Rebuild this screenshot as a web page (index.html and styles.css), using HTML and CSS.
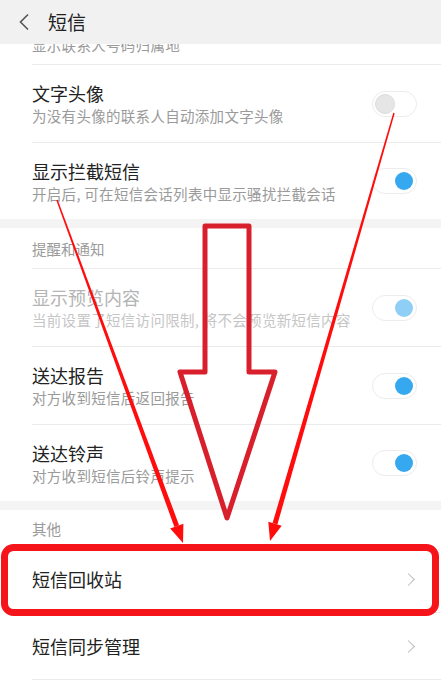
FILE: index.html
```html
<!DOCTYPE html>
<html>
<head>
  <meta charset="utf-8">
  <title>短信</title>
  <link rel="stylesheet" href="styles.css">
</head>
<body>
  <div class="screen">
    <header class="topbar">
      <svg class="back" width="12" height="18" viewBox="0 0 12 18">
        <path d="M10 1.5 L2.5 9 L10 16.5" fill="none" stroke="#555" stroke-width="1.6"/>
      </svg>
      <h1>短信</h1>
    </header>

    <main class="list">
      <!-- row scrolled up under the toolbar, only its last line peeks out -->
      <div class="row cut">
        <div class="desc">显示联系人号码归属地</div>
      </div>
      <div class="row">
        <div class="text">
          <div class="title">文字头像</div>
          <div class="desc">为没有头像的联系人自动添加文字头像</div>
        </div>
        <span class="switch"></span>
      </div>
      <div class="row last">
        <div class="text">
          <div class="title">显示拦截短信</div>
          <div class="desc">开启后, 可在短信会话列表中显示骚扰拦截会话</div>
        </div>
        <span class="switch on"></span>
      </div>

      <div class="band"></div>
      <div class="section">提醒和通知</div>
      <div class="row disabled">
        <div class="text">
          <div class="title">显示预览内容</div>
          <div class="desc">当前设置了短信访问限制, 将不会预览新短信内容</div>
        </div>
        <span class="switch on"></span>
      </div>
      <div class="row">
        <div class="text">
          <div class="title">送达报告</div>
          <div class="desc">对方收到短信后返回报告</div>
        </div>
        <span class="switch on"></span>
      </div>
      <div class="row last">
        <div class="text">
          <div class="title">送达铃声</div>
          <div class="desc">对方收到短信后铃声提示</div>
        </div>
        <span class="switch on"></span>
      </div>

      <div class="band"></div>
      <div class="section plain">其他</div>
      <div class="row link">
        <div class="title">短信回收站</div>
        <span class="chev"></span>
      </div>
      <div class="row link">
        <div class="title">短信同步管理</div>
        <span class="chev"></span>
      </div>
    </main>

    <!-- annotation drawn on top of the screenshot -->
    <svg class="marks" width="441" height="680" viewBox="0 0 441 680">
      <rect x="4.5" y="547.5" width="431" height="65" rx="9" fill="none" stroke="#f5141a" stroke-width="7"/>
      <polygon points="205,226 249,226 249,372 275,372 227,518 180,372 205,372"
               fill="none" stroke="#d81f2c" stroke-width="5" stroke-linejoin="round"/>
      <polygon points="57.7,199.7 56.3,200.3 174.4,527 179.1,525.2" fill="#ff0d0d"/>
      <polygon points="183,543 170.2,528.5 183.4,523.7" fill="#ff0d0d"/>
      <polygon points="394.7,113.2 393.3,112.8 272.6,523 277.4,524.4" fill="#ff0d0d"/>
      <polygon points="270,541 268.3,521.8 281.7,525.7" fill="#ff0d0d"/>
    </svg>
  </div>
</body>
</html>
```

FILE: styles.css
```css
body {
  margin: 0;
  background-color: #fff;
  font-family: "Noto Sans CJK SC", "Noto Sans", sans-serif;
}

.screen {
  position: relative;
  width: 441px;
  height: 680px;
  overflow: hidden;
}

.topbar {
  height: 44px;
  display: flex;
  align-items: center;
  background-color: #f1f1f1;
}

.back {
  margin-left: 18px;
  margin-right: 18px;
}

.topbar h1 {
  margin: 0;
  font-size: 19px;
  font-weight: normal;
  color: #222;
  line-height: 24px;
}

.row {
  box-sizing: border-box;
  height: 78px;
  margin-left: 32px;
  padding-right: 24px;
  display: flex;
  align-items: center;
  justify-content: space-between;
  border-bottom: 1px solid #ebebeb;
}

.row.cut {
  height: 21px;
  overflow: hidden;
  align-items: flex-start;
}

.row.cut .desc {
  margin-top: 0;
  line-height: 2px;
}

.row.last {
  height: 76px;
  border-bottom: none;
}

.row.link {
  height: 67px;
}

.title {
  font-size: 18px;
  line-height: 22px;
  color: #222;
}

.desc {
  margin-top: 2px;
  font-size: 14.5px;
  line-height: 19px;
  color: #9a9a9a;
  letter-spacing: 0.3px;
}

.disabled .title {
  color: #b4b4b4;
}

.disabled .desc {
  color: #c6c6c6;
}

.band {
  height: 9px;
  background-color: #f4f4f4;
}

.section {
  box-sizing: border-box;
  height: 41px;
  margin-left: 32px;
  display: flex;
  align-items: center;
  font-size: 14.5px;
  color: #9a9a9a;
  border-bottom: 1px solid #ebebeb;
}

.section.plain {
  height: 36px;
  border-bottom: none;
}

.switch {
  position: relative;
  box-sizing: border-box;
  width: 45px;
  height: 26px;
  border: 1px solid #ececec;
  border-radius: 13px;
  background-color: #fff;
}

.switch::after {
  content: "";
  position: absolute;
  top: 2px;
  left: 2px;
  box-sizing: border-box;
  width: 20px;
  height: 20px;
  border-radius: 50%;
  background-color: #e6e6e6;
  border: 1px solid #dcdcdc;
}

.switch.on::after {
  left: 22px;
  top: 3px;
  width: 18px;
  height: 18px;
  border: none;
  background-color: #36a8ef;
}

.disabled .switch.on::after {
  background-color: #8fcff6;
}

.chev {
  width: 8px;
  height: 8px;
  margin-right: 4px;
  border-top: 1.3px solid #bbb;
  border-right: 1.3px solid #bbb;
  transform: rotate(45deg);
}

.marks {
  position: absolute;
  top: 0;
  left: 0;
  pointer-events: none;
}
```
